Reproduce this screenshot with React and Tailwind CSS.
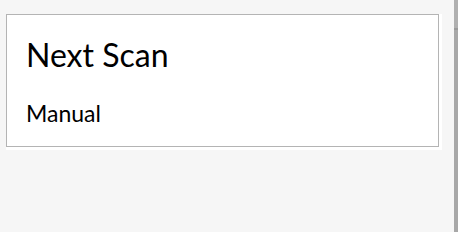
export default function App() {
  return (
    <div
      className="relative h-[232px] w-[458px] overflow-hidden bg-[#f6f6f6] pt-[14px] pl-[6px]"
      style={{ fontFamily: "Lato, 'Noto Sans', sans-serif" }}
    >
      <div className="w-[436px] bg-white pr-[3px] pb-[3px]">
        <div className="h-[133px] border border-[#b4b4b4] bg-white pl-[19px] pr-5 pt-[22px]">
          <h2 className="text-[32px] leading-[36px] text-black">Next Scan</h2>
          <p className="mt-[26px] text-[23px] leading-[28px] text-black">Manual</p>
        </div>
      </div>
      <div className="absolute right-0 top-0 h-full w-[4px] bg-[#a8a8a8]">
        <div className="h-[30px] border-b-2 border-[#9a9a9a] bg-[#b0b0b0]" />
      </div>
    </div>
  );
}
